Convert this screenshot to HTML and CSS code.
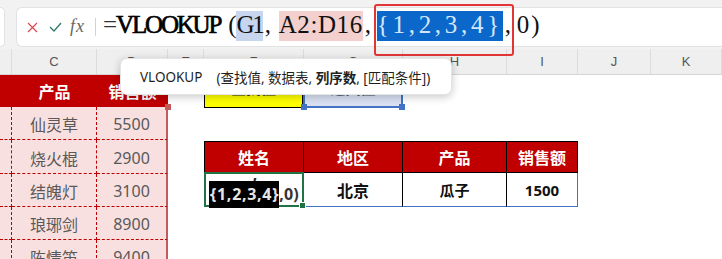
FILE: index.html
```html
<!DOCTYPE html>
<html lang="zh-CN">
<head>
<meta charset="utf-8">
<title>VLOOKUP</title>
<link rel="stylesheet" href="styles.css">
</head>
<body>
<div class="topbar">
  <div class="namebox"></div>
  <div class="fbar">
    <span class="ico ico-x"><svg width="11" height="11" viewBox="0 0 11 11"><path d="M1 1 L10 10 M10 1 L1 10" stroke="#d9484f" stroke-width="1.2" fill="none"/></svg></span>
    <span class="ico ico-ok"><svg width="13" height="10" viewBox="0 0 13 10"><path d="M1 5 L5 9 L12 1" stroke="#2f7c6b" stroke-width="1.3" fill="none"/></svg></span>
    <span class="fx">fx</span>
    <span class="divider"></span>
    <div class="formula"><span class="eq">=</span><span class="fn">VLOOKUP</span><span class="paren-l">(</span><span class="ref ref-g">G1</span><span class="sep">,</span><span class="ref ref-a">A2:D16</span><span class="sep">,</span><span class="ref ref-arr">{1,2,3,4}</span><span class="sep">,</span><span class="num">0</span><span class="paren-r">)</span></div>
  </div>
</div>
<div class="refbox"></div>

<div class="colheads">
  <div class="ch"></div>
  <div class="ch">C</div>
  <div class="ch">D</div>
  <div class="ch">E</div>
  <div class="ch">F</div>
  <div class="ch">G</div>
  <div class="ch">H</div>
  <div class="ch">I</div>
  <div class="ch">J</div>
  <div class="ch">K</div>
</div>

<div class="sheet">
  <div class="ltable">
    <div class="lh"></div><div class="lh">产品</div><div class="lh">销售额</div>
    <div class="lc colb"></div><div class="lc colc">仙灵草</div><div class="lc cold">5500</div>
    <div class="lc colb"></div><div class="lc colc">烧火棍</div><div class="lc cold">2900</div>
    <div class="lc colb"></div><div class="lc colc">结魄灯</div><div class="lc cold">3100</div>
    <div class="lc colb"></div><div class="lc colc">琅琊剑</div><div class="lc cold">8900</div>
    <div class="lc colb"></div><div class="lc colc">陈情笛</div><div class="lc cold">9400</div>
  </div>
  <div class="col-e"></div>
  <div class="rarea">
    <div class="row1">
      <div class="ybox">查找值</div>
      <div class="bbox">返回值</div>
    </div>
    <div class="table2">
      <div class="th first">姓名</div>
      <div class="th">地区</div>
      <div class="th">产品</div>
      <div class="th">销售额</div>
      <div class="td active">
        <span class="line1">,</span>
        <span class="line2"><span class="sel">{1,2,3,4}</span>,0)</span>
      </div>
      <div class="td">北京</div>
      <div class="td small">瓜子</div>
      <div class="td small last">1500</div>
    </div>
  </div>
</div>

<div class="tooltip"><span class="tt-fn">VLOOKUP</span><span class="tt-args">(查找值, 数据表, <b>列序数</b>, [匹配条件])</span></div>
</body>
</html>
```

FILE: styles.css
```css
* { box-sizing: border-box; }

body {
  margin: 0;
  width: 722px;
  height: 259px;
  overflow: hidden;
  position: relative;
  background: #ffffff;
  font-family: "Noto Sans", "Noto Sans CJK SC", sans-serif;
}

/* ---------- formula bar ---------- */
.topbar {
  height: 49px;
  background: #f2f2f2;
  display: flex;
  padding-top: 7px;
}

.namebox {
  width: 5px;
  height: 40px;
  background: #ffffff;
  border: 1px solid #e2e2e2;
  border-left: 0;
  border-radius: 0 6px 6px 0;
}

.fbar {
  margin-left: 11px;
  flex: 1;
  height: 40px;
  background: #ffffff;
  border: 1px solid #e2e2e2;
  border-right: 0;
  border-radius: 6px 0 0 6px;
  display: flex;
  align-items: center;
}

.ico { display: flex; align-items: center; }
.ico-x { margin-left: 10px; width: 11px; }
.ico-ok { margin-left: 11px; width: 13px; }

.fx {
  margin-left: 8px;
  font-family: "Liberation Serif", serif;
  font-style: italic;
  font-size: 18px;
  letter-spacing: 1px;
  color: #666666;
  margin-bottom: 2px;
}

.divider {
  margin-left: 10px;
  width: 1px;
  height: 18px;
  background: #d2d2d2;
}

.formula {
  margin-left: 7px;
  margin-bottom: 4px;
  font-family: "Liberation Serif", serif;
  font-size: 25px;
  line-height: 30px;
  color: #111111;
  white-space: nowrap;
}

.eq { letter-spacing: -1px; color: #333; }
.fn {
  letter-spacing: -2.2px;
  color: #000;
  -webkit-text-stroke: 0.7px #000;
}
.paren-l { margin-left: 8px; }
.paren-r { margin-left: 2px; }

.ref { padding: 0 0 3px; }
.ref-g { background: #c8d5ef; letter-spacing: -2.2px; }
.ref-a { background: #f3d0cd; letter-spacing: 0.6px; }
.ref-arr { background: #0b67c9; color: #d4e6fb; letter-spacing: 3.7px; }

.sep {
  display: inline-block;
  width: 14px;
  padding-left: 2px;
}
.ref-g + .sep { width: 16px; }

.refbox {
  position: absolute;
  left: 374px;
  top: 4px;
  width: 140px;
  height: 52px;
  border: 2px solid #e23636;
  border-radius: 3px;
}

/* ---------- column headers ---------- */
.colheads {
  display: grid;
  grid-template-columns: 12px 85px 71px 36px 100px 99px 104px 71px 73px 71px;
  height: 26px;
  background: #efefef;
  border-bottom: 1px solid #d6d6d6;
}

.ch {
  border-right: 1px solid #dcdcdc;
  display: flex;
  align-items: center;
  justify-content: center;
  font-family: "Liberation Sans", sans-serif;
  font-size: 13px;
  color: #555555;
}

/* ---------- sheet ---------- */
.sheet {
  display: flex;
  align-items: flex-start;
}

.ltable {
  position: relative;
  width: 168px;
  display: grid;
  grid-template-columns: 12px 85px 71px;
  grid-template-rows: 32px 33px 34px 33px 33px 33px;
}

.ltable::after {
  content: "";
  position: absolute;
  left: 165px;
  top: 29px;
  width: 6px;
  height: 6px;
  background: #c45b5b;
}

.lh {
  background: #c00000;
  color: #ffffff;
  font-weight: 700;
  font-size: 16px;
  display: flex;
  align-items: center;
  justify-content: center;
  white-space: nowrap;
  overflow: hidden;
}

.lc {
  background: #f8e0e0;
  color: #595959;
  font-size: 16px;
  border-bottom: 1px dashed #c00000;
  display: flex;
  align-items: center;
  justify-content: center;
  padding-top: 2px;
}

.colb, .colc { border-right: 1px dashed #c00000; }
.cold { border-right: 2px solid #c45b5b; }

.col-e { width: 36px; }

.rarea {
  flex: 1;
  display: flex;
  flex-direction: column;
}

.row1 {
  display: flex;
  height: 33px;
}

.ybox {
  width: 99px;
  background: #ffff00;
  border: 1px solid #000000;
  display: flex;
  align-items: center;
  justify-content: center;
  padding-bottom: 8px;
  font-size: 15px;
  font-weight: 700;
  color: #333;
}

.bbox {
  position: relative;
  width: 100px;
  background: #d9e1f2;
  border: 2px solid #4472c4;
  display: flex;
  align-items: center;
  justify-content: center;
  padding-bottom: 8px;
  font-size: 15px;
  font-weight: 700;
  color: #44546a;
}

.bbox::before,
.bbox::after {
  content: "";
  position: absolute;
  bottom: -4px;
  width: 6px;
  height: 6px;
  background: #4472c4;
}
.bbox::before { left: -4px; }
.bbox::after { right: -4px; }

.table2 {
  margin-top: 33px;
  display: grid;
  grid-template-columns: 100px 99px 104px 71px;
  grid-template-rows: 32px 34px;
}

.th {
  background: #c00000;
  color: #ffffff;
  font-weight: 700;
  font-size: 16px;
  border-top: 1px solid #000000;
  border-bottom: 1px solid #000000;
  border-right: 1px solid #000000;
  display: flex;
  align-items: center;
  justify-content: center;
}
.th.first { border-left: 1px solid #000000; }

.td {
  background: #ffffff;
  color: #111111;
  font-weight: 700;
  font-size: 16px;
  border-right: 1px solid #000000;
  border-bottom: 1px solid #4472c4;
  display: flex;
  align-items: center;
  justify-content: center;
}
.td.small { font-size: 15px; }
.td.last { border-right-color: #4472c4; }

.td.active {
  position: relative;
  border: 2px solid #217346;
  margin-top: -1px;
  height: 35px;
  flex-direction: column;
  justify-content: flex-end;
  font-size: 16px;
  line-height: 18px;
  color: #333333;
  padding-bottom: 2px;
}

.td.active::after {
  content: "";
  position: absolute;
  right: -4px;
  bottom: -4px;
  width: 5px;
  height: 5px;
  background: #217346;
  border: 1px solid #ffffff;
}

.line1 {
  display: block;
  height: 6px;
  line-height: 2px;
  margin-bottom: 10px;
  font-size: 16px;
  color: #222222;
  padding-left: 2px;
}
.line2 { display: block; white-space: nowrap; letter-spacing: 0.2px; }
.sel {
  background: #000000;
  color: #e6e6e6;
  letter-spacing: 0.7px;
  padding: 2px 0 3px 1px;
}

/* ---------- tooltip ---------- */
.tooltip {
  position: absolute;
  left: 120px;
  top: 58px;
  width: 332px;
  height: 37px;
  background: #ffffff;
  border: 1px solid #e4e4e4;
  border-radius: 7px;
  box-shadow: 0 2px 8px rgba(0, 0, 0, 0.22);
  display: flex;
  align-items: center;
  padding-left: 19px;
  font-size: 13.5px;
  color: #1f1f1f;
  white-space: nowrap;
}

.tt-args { margin-left: 14px; }
.tt-args b { font-weight: 700; }
```
